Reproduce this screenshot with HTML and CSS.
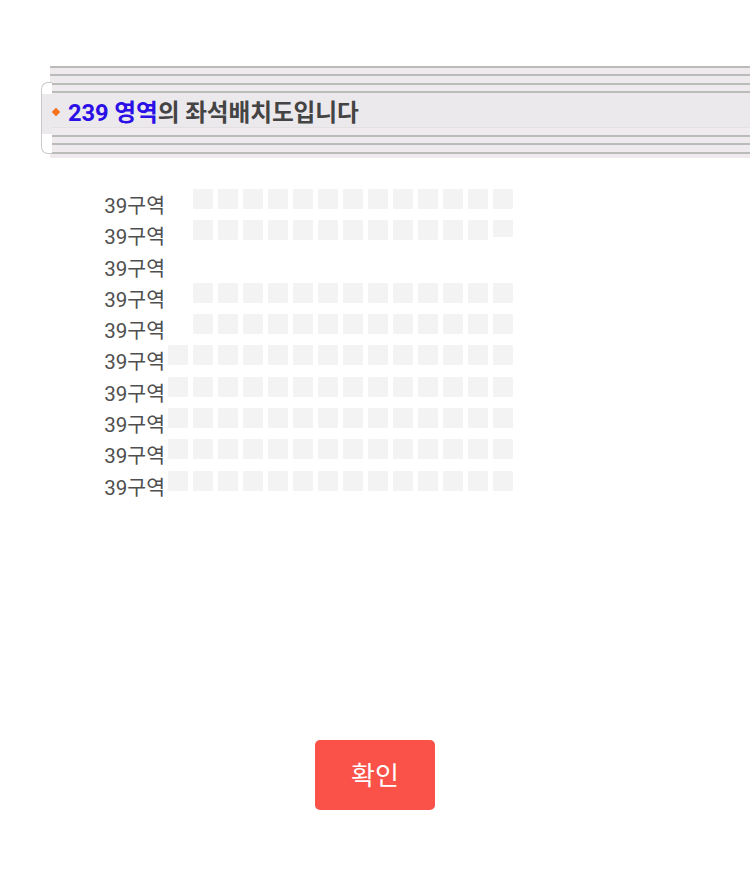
FILE: index.html
```html
<!DOCTYPE html>
<html lang="ko">
<head>
<meta charset="utf-8">
<title>좌석배치도</title>
<link rel="stylesheet" href="styles.css">
</head>
<body>
  <header class="banner">
    <div class="stripes stripes-top"></div>
    <h1 class="banner-title"><span class="diamond"></span><span class="zone">239 영역</span>의 좌석배치도입니다</h1>
    <div class="stripes stripes-bottom"></div>
  </header>

  <section class="seatmap">
    <div class="row"><span class="label">39구역</span><div class="seats"><i class="seat gap"></i><i class="seat"></i><i class="seat"></i><i class="seat"></i><i class="seat"></i><i class="seat"></i><i class="seat"></i><i class="seat"></i><i class="seat"></i><i class="seat"></i><i class="seat"></i><i class="seat"></i><i class="seat"></i><i class="seat"></i></div></div>
    <div class="row"><span class="label">39구역</span><div class="seats"><i class="seat gap"></i><i class="seat"></i><i class="seat"></i><i class="seat"></i><i class="seat"></i><i class="seat"></i><i class="seat"></i><i class="seat"></i><i class="seat"></i><i class="seat"></i><i class="seat"></i><i class="seat"></i><i class="seat"></i><i class="seat short"></i></div></div>
    <div class="row"><span class="label">39구역</span><div class="seats"></div></div>
    <div class="row"><span class="label">39구역</span><div class="seats"><i class="seat gap"></i><i class="seat"></i><i class="seat"></i><i class="seat"></i><i class="seat"></i><i class="seat"></i><i class="seat"></i><i class="seat"></i><i class="seat"></i><i class="seat"></i><i class="seat"></i><i class="seat"></i><i class="seat"></i><i class="seat"></i></div></div>
    <div class="row"><span class="label">39구역</span><div class="seats"><i class="seat gap"></i><i class="seat"></i><i class="seat"></i><i class="seat"></i><i class="seat"></i><i class="seat"></i><i class="seat"></i><i class="seat"></i><i class="seat"></i><i class="seat"></i><i class="seat"></i><i class="seat"></i><i class="seat"></i><i class="seat"></i></div></div>
    <div class="row"><span class="label">39구역</span><div class="seats"><i class="seat"></i><i class="seat"></i><i class="seat"></i><i class="seat"></i><i class="seat"></i><i class="seat"></i><i class="seat"></i><i class="seat"></i><i class="seat"></i><i class="seat"></i><i class="seat"></i><i class="seat"></i><i class="seat"></i><i class="seat"></i></div></div>
    <div class="row"><span class="label">39구역</span><div class="seats"><i class="seat"></i><i class="seat"></i><i class="seat"></i><i class="seat"></i><i class="seat"></i><i class="seat"></i><i class="seat"></i><i class="seat"></i><i class="seat"></i><i class="seat"></i><i class="seat"></i><i class="seat"></i><i class="seat"></i><i class="seat"></i></div></div>
    <div class="row"><span class="label">39구역</span><div class="seats"><i class="seat"></i><i class="seat"></i><i class="seat"></i><i class="seat"></i><i class="seat"></i><i class="seat"></i><i class="seat"></i><i class="seat"></i><i class="seat"></i><i class="seat"></i><i class="seat"></i><i class="seat"></i><i class="seat"></i><i class="seat"></i></div></div>
    <div class="row"><span class="label">39구역</span><div class="seats"><i class="seat"></i><i class="seat"></i><i class="seat"></i><i class="seat"></i><i class="seat"></i><i class="seat"></i><i class="seat"></i><i class="seat"></i><i class="seat"></i><i class="seat"></i><i class="seat"></i><i class="seat"></i><i class="seat"></i><i class="seat"></i></div></div>
    <div class="row"><span class="label">39구역</span><div class="seats"><i class="seat"></i><i class="seat"></i><i class="seat"></i><i class="seat"></i><i class="seat"></i><i class="seat"></i><i class="seat"></i><i class="seat"></i><i class="seat"></i><i class="seat"></i><i class="seat"></i><i class="seat"></i><i class="seat"></i><i class="seat"></i></div></div>
  </section>

  <div class="actions">
    <button class="confirm" type="button">확인</button>
  </div>
</body>
</html>
```

FILE: styles.css
```css
* {
  box-sizing: border-box;
}

html,
body {
  margin: 0;
  padding: 0;
  background: #ffffff;
}

body {
  width: 750px;
  font-family: Roboto, "Noto Sans CJK KR", "Noto Sans", sans-serif;
}

/* ---------- striped title banner ---------- */
.banner {
  position: relative;
  margin: 66px 0 0 50px;
}

/* rounded bracket hanging off the left edge of the banner */
.banner::before {
  content: "";
  position: absolute;
  left: -9px;
  top: 16px;
  width: 10px;
  height: 70px;
  border: 1.5px solid #c9c9c9;
  border-right: none;
  border-radius: 7px 0 0 7px;
  background: linear-gradient(to bottom, #ffffff 0 11px, #ece9ec 11px 51px, #ffffff 51px);
}

.stripes {
  background: repeating-linear-gradient(
    to bottom,
    #b9bcb9 0,
    #b9bcb9 2px,
    #eeeaee 2px,
    #eeeaee 8.4px
  );
}

.stripes-top {
  height: 27px;
}

.stripes-bottom {
  height: 24px;
  background-position: 0 1px;
  background-color: #eeeaee;
}

.banner-title {
  display: flex;
  align-items: center;
  height: 41px;
  margin: 0;
  padding: 0 0 5px 2px;
  background: linear-gradient(to bottom, #ece9ec 0 34px, #e4e1e4 34px 35px, #efebef 35px);
  font-size: 23.7px;
  font-weight: 700;
  color: #444444;
  letter-spacing: -0.1px;
}

.diamond {
  display: inline-block;
  flex: none;
  width: 6px;
  height: 6px;
  margin: 2px 9px 0 1px;
  background: #f5701c;
  transform: rotate(45deg);
}

.zone {
  color: #2a0fe6;
  white-space: pre;
}

/* ---------- seat map ---------- */
.seatmap {
  margin-top: 31px;
  display: flex;
  flex-direction: column;
}

.row {
  display: flex;
  align-items: flex-start;
  height: 31.3px;
}

.label {
  width: 75px;
  margin-left: 90px;
  margin-right: 3px;
  padding-top: 2px;
  text-align: right;
  font-size: 20.5px;
  line-height: 30px;
  color: #4f4f4f;
}

.seats {
  display: flex;
  gap: 5px;
}

.seat {
  display: block;
  width: 20px;
  height: 20px;
  background: #f3f3f3;
  border-radius: 1px;
}

.seat.gap {
  background: transparent;
}

.seat.short {
  height: 17px;
}

/* ---------- confirm button ---------- */
.actions {
  display: flex;
  justify-content: center;
  margin-top: 238px;
}

.confirm {
  width: 120px;
  height: 70px;
  border: none;
  border-radius: 5px;
  background: #fa5149;
  color: #ffffff;
  font-family: Roboto, "Noto Sans CJK KR", "Noto Sans", sans-serif;
  font-size: 26px;
  font-weight: 400;
  padding: 0 0 2px;
}
```
